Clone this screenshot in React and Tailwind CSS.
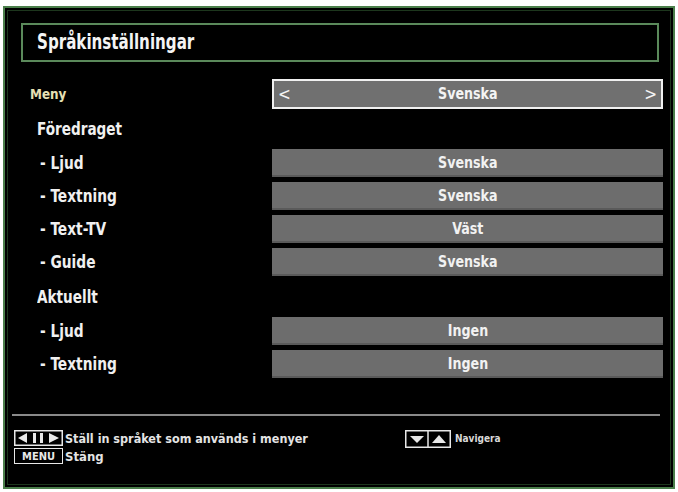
import React from "react";

const font = "font-['DejaVu_Sans_Condensed','DejaVu_Sans',sans-serif]";

function ValueBox({ children }) {
  return (
    <div className="flex h-[28px] w-[391px] items-center justify-center bg-[#6d6d6d] text-[16px] font-bold leading-none text-[#f2f2f2] shadow-[inset_0_-2px_0_#5a5a5a]">
      <span className="inline-block scale-x-[0.88]">{children}</span>
    </div>
  );
}

function Row({ label, value }) {
  return (
    <div className="mt-[5px] flex h-[28px] items-center first:mt-0">
      <div className="w-[264px] pl-[32px] text-[17px] font-bold leading-none text-[#f0f0f0]">
        <span className="inline-block origin-left scale-x-[0.9]">- {label}</span>
      </div>
      <ValueBox>{value}</ValueBox>
    </div>
  );
}

function Header({ children, height }) {
  return (
    <div
      className="flex items-center pl-[29px] text-[18px] font-bold leading-none text-[#f0f0f0]"
      style={{ height }}
    >
      <span className="inline-block origin-left scale-x-[0.84]">{children}</span>
    </div>
  );
}

function LeftRightKeys() {
  return (
    <svg width="49" height="16" viewBox="0 0 49 16">
      <rect x="0.75" y="0.75" width="47.5" height="14.5" fill="#000" stroke="#e8e8e8" strokeWidth="1.5" />
      <polygon points="4,8 13,3 13,13" fill="#e8e8e8" />
      <rect x="19" y="3" width="3" height="10" fill="#e8e8e8" />
      <rect x="26" y="3" width="3" height="10" fill="#e8e8e8" />
      <polygon points="45,8 35,3 35,13" fill="#e8e8e8" />
    </svg>
  );
}

function UpDownKeys() {
  return (
    <svg width="46" height="18" viewBox="0 0 46 18">
      <rect x="0.75" y="0.75" width="44.5" height="16.5" fill="#000" stroke="#e8e8e8" strokeWidth="1.5" />
      <line x1="23" y1="1" x2="23" y2="17" stroke="#e8e8e8" strokeWidth="1.5" />
      <polygon points="5,6 19,6 12,13" fill="#e8e8e8" />
      <polygon points="27,13 41,13 34,5" fill="#e8e8e8" />
    </svg>
  );
}

export default function App() {
  return (
    <div className={`h-[492px] w-[678px] bg-white pl-[3px] pt-[6px] ${font}`}>
      <div className="h-[483px] w-[672px] border-2 border-[#4b7f4b] bg-black p-[2px]">
        <div className="flex h-full flex-col border border-[#1d361d]">
          <div className="ml-[13px] mt-[12px] flex h-[39px] w-[638px] items-center border-2 border-[#5b8a5b] pl-[14px] text-[21px] font-bold text-[#f4f4f4]">
            <span className="inline-block origin-left scale-x-[0.8]">Språkinställningar</span>
          </div>

          <div className="mt-[17px] flex h-[30px] items-center">
            <div className="w-[264px] pl-[22px] text-[14px] font-bold text-[#e6e0b4]">
              <span className="inline-block origin-left scale-x-[0.95]">Meny</span>
            </div>
            <div className="flex h-[30px] w-[391px] items-center justify-between border-2 border-[#f0f0f0] bg-[#707070] px-[4px] text-[17px] font-bold leading-none text-[#f4f4f4]">
              <span className="font-normal">&lt;</span>
              <span className="inline-block scale-x-[0.88] text-[16px]">Svenska</span>
              <span className="font-normal">&gt;</span>
            </div>
          </div>

          <Header height={40}>Föredraget</Header>
          <div className="flex flex-col">
            <Row label="Ljud" value="Svenska" />
            <Row label="Textning" value="Svenska" />
            <Row label="Text-TV" value="Väst" />
            <Row label="Guide" value="Svenska" />
          </div>

          <Header height={41}>Aktuellt</Header>
          <div className="flex flex-col">
            <Row label="Ljud" value="Ingen" />
            <Row label="Textning" value="Ingen" />
          </div>

          <div className="ml-[4px] mt-[36px] h-[2px] w-[648px] bg-[#8a8a8a]" />

          <div className="ml-[6px] mt-[14px] flex">
            <div className="flex w-[391px] flex-col gap-[2px]">
              <div className="flex items-center gap-[2px]">
                <LeftRightKeys />
                <span className="inline-block origin-left scale-x-[0.96] text-[13px] font-bold leading-none text-[#e4e4e4]">
                  Ställ in språket som används i menyer
                </span>
              </div>
              <div className="flex items-center gap-[2px]">
                <div className="flex h-[16px] w-[49px] items-center justify-center border-[1.5px] border-[#e8e8e8] bg-black text-[11px] font-bold leading-none text-[#e8e8e8]">
                  MENU
                </div>
                <span className="text-[13px] font-bold leading-none text-[#e4e4e4]">
                  Stäng
                </span>
              </div>
            </div>
            <div className="flex items-center gap-[4px] self-start">
              <UpDownKeys />
              <span className="text-[10px] font-bold leading-none text-[#d8d8d8]">
                Navigera
              </span>
            </div>
          </div>
        </div>
      </div>
    </div>
  );
}
